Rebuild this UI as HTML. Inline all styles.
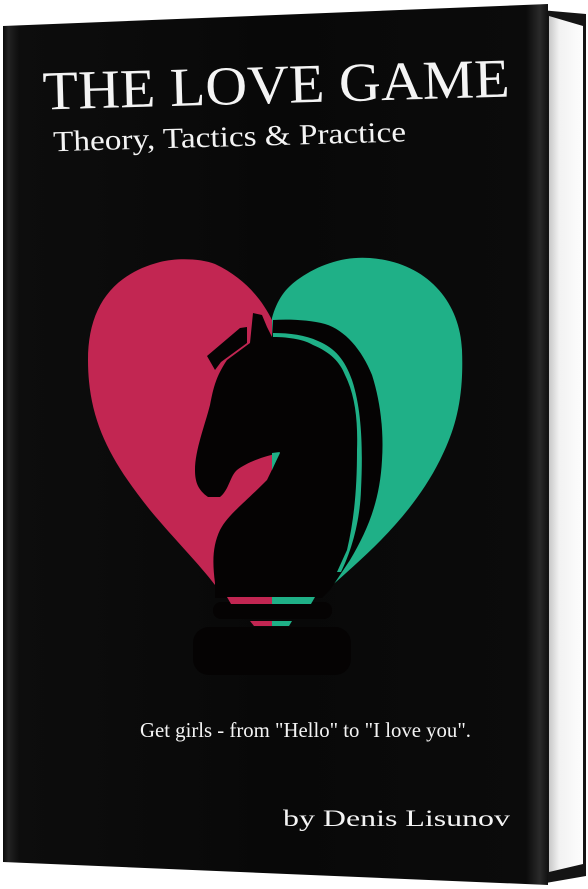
<!DOCTYPE html>
<html><head><meta charset="utf-8"><style>
html,body{margin:0;padding:0;background:#fff;width:588px;height:889px;overflow:hidden}
svg{display:block}
text{font-family:"Liberation Serif",serif;fill:#f4f4f4}
</style></head><body>
<svg width="588" height="889" viewBox="0 0 588 889">
<defs>
<linearGradient id="pg" x1="0" x2="1" y1="0" y2="0">
<stop offset="0" stop-color="#c8c8c8"/><stop offset="0.3" stop-color="#f2f2f2"/><stop offset="1" stop-color="#fdfdfd"/>
</linearGradient>
<linearGradient id="cv" x1="0" x2="1" y1="0" y2="0">
<stop offset="0" stop-color="#0a0a0a"/><stop offset="0.01" stop-color="#222"/><stop offset="0.03" stop-color="#0d0d0d"/><stop offset="0.5" stop-color="#080808"/><stop offset="0.96" stop-color="#0b0b0b"/><stop offset="0.985" stop-color="#2a2a2a"/><stop offset="1" stop-color="#111"/>
</linearGradient>
</defs>
<polygon points="540,10 586,14 586,876 540,884" fill="#141414"/>
<polygon points="549,16 583,26 583,864 549,872" fill="url(#pg)"/>
<polygon points="3,26 548,4 548,885 3,862" fill="url(#cv)"/>
<g transform="rotate(-1.6 276 100)">
<text x="43" y="103" font-size="55" textLength="467" lengthAdjust="spacingAndGlyphs">THE LOVE GAME</text>
<text x="52" y="145" font-size="29" textLength="353" lengthAdjust="spacingAndGlyphs">Theory, Tactics &amp; Practice</text>
</g>
<path d="M272,320 C262,300 245,278 215,264 C200,258 175,258 160,262 C110,275 88,310 88,360 C88,420 110,460 150,510 C175,540 200,565 215,585 L272,610 Z" fill="#c22652"/>
<path d="M272,318 C277,300 285,288 300,278 C320,264 345,256 370,258 C425,262 460,300 462,350 C464,400 455,430 440,460 C410,520 360,560 327,590 L272,610 Z" fill="#1fb087"/>
<g fill="#050303">
<path d="M253,313 L262,315 L267,327 L272,337 L273,320 C290,319 310,320 325,324 C345,330 362,350 372,375 C380,400 384,430 382,460 C380,500 368,530 350,560 L330,590 L322,598 L215,598 L215,583 C212,560 213,545 220,530 C228,515 240,507 267,480 L280,453 C270,455 250,460 237,470 C230,476 229,490 220,497 L208,497 C198,490 195,482 195,470 C195,450 205,425 210,405 C213,390 215,378 227,360 L250,343 Z"/>
<path d="M207,356 L240,328 L247,327 L247,343 L221,362 L215,370 Z"/>
<rect x="213" y="602" width="119" height="17" rx="8"/>
<rect x="193" y="627" width="158" height="48" rx="16"/>
</g>
<path d="M273,337 C290,337 305,340 313,345 C330,352 340,362 345,375 C355,395 358,420 357,450 C357,490 354,520 347,550 L337,572 L341,572 C352,550 360,520 361,490 C363,450 362,410 352,380 C345,360 335,348 318,341 C305,335 290,333 273,333 Z" fill="#1fb087"/>
<path d="M272,453 L280,452 L272,470 Z" fill="#1fb087"/>
<path d="M227,597 L272,597 L272,604 L231,604 Z" fill="#c22652"/>
<path d="M272,597 L315,597 L311,604 L272,604 Z" fill="#1fb087"/>
<path d="M250,621 L272,621 L272,626 L254,626 Z" fill="#c22652"/>
<path d="M272,621 L292,621 L289,626 L272,626 Z" fill="#1fb087"/>
<text x="140" y="737" font-size="21" textLength="331" lengthAdjust="spacingAndGlyphs">Get girls - from "Hello" to "I love you".</text>
<text x="283" y="826" font-size="23" textLength="227" lengthAdjust="spacingAndGlyphs">by Denis Lisunov</text>
</svg>
</body></html>
